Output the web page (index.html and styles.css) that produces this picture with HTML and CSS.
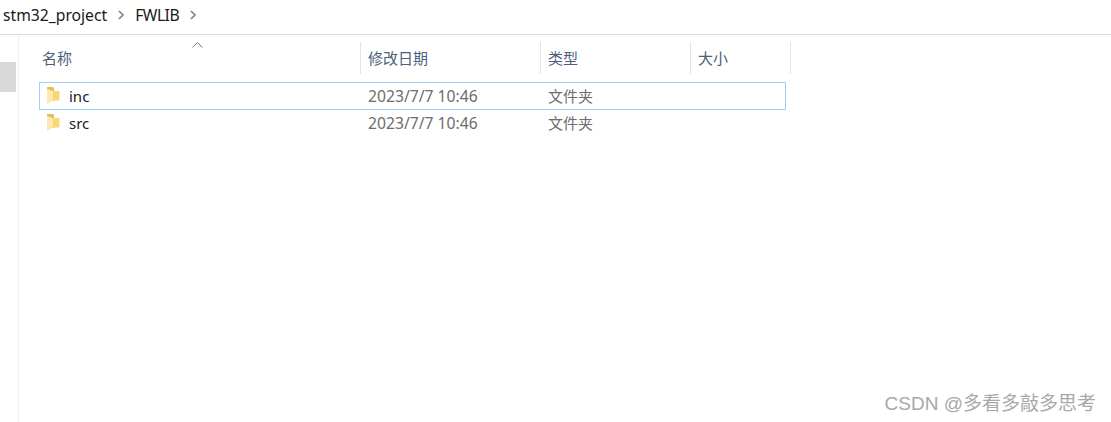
FILE: index.html
```html
<!DOCTYPE html>
<html lang="zh-CN">

<head>
    <meta charset="UTF-8">
    <title>FWLIB</title>
    <link rel="stylesheet" href="styles.css">
</head>

<body>
    <!-- 地址栏 -->
    <div class="crumbs">
        <span>stm32_project</span>
        <svg class="chevron" width="8" height="10" viewBox="0 0 8 10"><path d="M2 1l4 4-4 4" /></svg>
        <span class="crumb-last">FWLIB</span>
        <svg class="chevron" width="8" height="10" viewBox="0 0 8 10"><path d="M2 1l4 4-4 4" /></svg>
    </div>

    <div class="main">
        <div class="sidebar">
            <div class="side-item"></div>
        </div>

        <div class="list">
            <svg class="sort" width="11" height="6" viewBox="0 0 11 6"><path d="M0.5 5.5l5-5 5 5" /></svg>
            <div class="head">
                <div class="col col-name">名称</div>
                <div class="col col-date">修改日期</div>
                <div class="col col-type">类型</div>
                <div class="col col-size">大小</div>
            </div>

            <div class="row selected">
                <div class="name">
                    <svg class="folder" width="13" height="17" viewBox="0 0 13 17">
                        <path fill="#e9bd4f" d="M0 0h6l1 1v13h-7z" />
                        <path fill="#f8d775" d="M6 4h6.500v9.500h-6.500z" />
                        <path fill="#fce9ae" d="M0 2l6 2v9.500l-6 3.500z" />
                    </svg>
                    <span>inc</span>
                </div>
                <div class="date">2023/7/7 10:46</div>
                <div class="type">文件夹</div>
            </div>
            <div class="row">
                <div class="name">
                    <svg class="folder" width="13" height="17" viewBox="0 0 13 17">
                        <path fill="#e9bd4f" d="M0 0h6l1 1v13h-7z" />
                        <path fill="#f8d775" d="M6 4h6.500v9.500h-6.500z" />
                        <path fill="#fce9ae" d="M0 2l6 2v9.500l-6 3.500z" />
                    </svg>
                    <span>src</span>
                </div>
                <div class="date">2023/7/7 10:46</div>
                <div class="type">文件夹</div>
            </div>
        </div>
    </div>

    <div class="watermark">CSDN @多看多敲多思考</div>
</body>

</html>
```

FILE: styles.css
```css
body {
    margin: 0;
    height: 422px;
    overflow: hidden;
    background-color: #fff;
    font-family: "Noto Sans", "Noto Sans CJK SC", sans-serif;
    font-size: 15px;
    color: #1a1a1a;
    display: flex;
    flex-direction: column;
}

.crumbs {
    box-sizing: border-box;
    padding: 0 0 4px 3px;
    border-bottom: 1px solid #dcdcdc;
    height: 35px;
    display: flex;
    align-items: center;
    gap: 10px;
    font-size: 15.700px;
}

.crumb-last {
    letter-spacing: -0.500px;
}

.chevron {
    fill: none;
    stroke: #808080;
    stroke-width: 1.6;
}

.main {
    flex: 1;
    display: flex;
}

.sidebar {
    width: 18px;
    border-right: 1px solid #efefef;
    padding-top: 27px;
}

.side-item {
    width: 16px;
    height: 30px;
    background-color: #d9d9d9;
}

.list {
    position: relative;
    padding: 7px 0 0 20px;
}

.sort {
    position: absolute;
    left: 173px;
    top: 7px;
    fill: none;
    stroke: #7a7a7a;
}

.head {
    display: flex;
    height: 32px;
    margin-bottom: 8px;
    color: #4c607a;
}

.col {
    box-sizing: border-box;
    line-height: 32px;
    padding-left: 7px;
    border-right: 1px solid #e5e5e5;
}

.col-name {
    width: 322px;
    padding-left: 3px;
}

.col-date {
    width: 180px;
}

.col-type {
    width: 150px;
}

.col-size {
    width: 100px;
}

.row {
    display: flex;
    align-items: center;
    box-sizing: border-box;
    width: 747px;
    height: 28px;
    border: 1px solid transparent;
    margin-bottom: -1px;
    color: #6d6d6d;
}

.selected {
    border-color: #99d1ff;
}

.name {
    width: 320px;
    display: flex;
    align-items: center;
    gap: 9px;
    padding-left: 7px;
    box-sizing: border-box;
    color: #1a1a1a;
}

.folder {
    margin-top: -2px;
}

.date {
    width: 180px;
    padding-left: 8px;
    box-sizing: border-box;
    font-size: 15.700px;
}

.type {
    padding-left: 8px;
    margin-top: -2px;
}

.watermark {
    position: absolute;
    right: 15px;
    bottom: 7px;
    font-family: "Liberation Sans", "Noto Sans CJK SC", sans-serif;
    font-size: 19px;
    color: #a8a8a8;
}
```
